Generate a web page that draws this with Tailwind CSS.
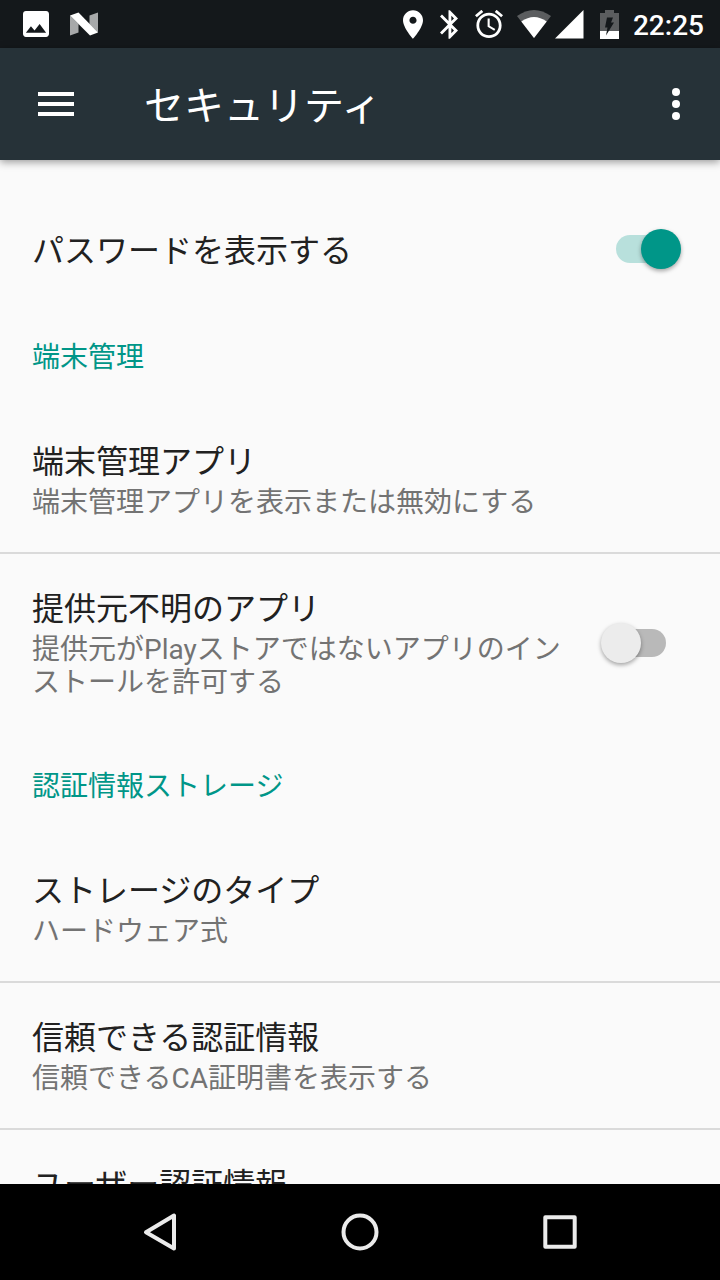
<!DOCTYPE html>
<html lang="ja">
<head>
  <meta charset="UTF-8">
  <meta name="viewport" content="width=device-width, initial-scale=1">
  <title>セキュリティ</title>
  <script src="https://cdn.jsdelivr.net/npm/@tailwindcss/browser@4"></script>
  <style>
    body {
      font-family: Roboto, 'Noto Sans CJK JP', sans-serif;
    }
  </style>
</head>
<body class="h-[1280px] w-[720px] flex flex-col overflow-hidden bg-[#fafafa] text-[#212121]">

  <!-- Status bar -->
  <div class="flex h-12 shrink-0 items-center bg-[#14181b] pl-[23px] pr-4 text-white">
    <svg class="h-[26px] w-[26px]" viewBox="3 3 18 18" fill="currentColor"><path d="M21 19V5c0-1.100-.9-2-2-2H5c-1.100 0-2 .9-2 2v14c0 1.100.9 2 2 2h14c1.100 0 2-.9 2-2zM8.500 13.500l2.500 3.010L14.500 12l4.500 6H5l3.500-4.500z"/></svg>
    <svg class="ml-[21px] h-6 w-7" viewBox="0 0 28 24">
      <path d="M0 3.500L8.500 12v8.500L0 23.500zM28 .5v20L19.500 12V3.500z" fill="#a7a9aa"/>
      <path d="M0 3.500L8.500 .5 28 20.500 20 23.500z" fill="#fff"/>
    </svg>
    <svg class="ml-auto h-[29px] w-5" viewBox="5 2 14 20" fill="currentColor"><path d="M12 2C8.130 2 5 5.130 5 9c0 5.250 7 13 7 13s7-7.750 7-13c0-3.870-3.130-7-7-7zm0 9.500c-1.380 0-2.500-1.120-2.500-2.500s1.120-2.500 2.500-2.500 2.500 1.120 2.500 2.500-1.120 2.500-2.500 2.500z"/></svg>
    <svg class="ml-[17px] h-[29px] w-[18px]" viewBox="5 2 12.710 20" fill="currentColor"><path d="M17.710 7.710L12 2h-1v7.590L6.410 5 5 6.410 10.590 12 5 17.590 6.410 19 11 14.410V22h1l5.710-5.710-4.300-4.290 4.300-4.290zM13 5.830l1.880 1.880L13 9.590V5.830zm1.880 10.460L13 18.170v-3.760l1.880 1.880z"/></svg>
    <svg class="ml-[17px] h-7 w-7" viewBox="2 2 20 20" fill="currentColor"><path d="M22 5.720l-4.600-3.860-1.290 1.530 4.600 3.860L22 5.720zM7.880 3.390L6.600 1.860 2 5.710l1.290 1.530 4.590-3.850zM12.500 8H11v6l4.750 2.850.75-1.230-4-2.370V8zM12 4c-4.970 0-9 4.030-9 9s4.020 9 9 9c4.970 0 9-4.030 9-9s-4.030-9-9-9zm0 16c-3.870 0-7-3.130-7-7s3.130-7 7-7 7 3.130 7 7-3.130 7-7 7z"/></svg>
    <svg class="ml-[14px] h-7 w-[34px]" viewBox="0 0 34 28">
      <path d="M0 6Q17-6 34 6L17 28z" fill="#5b5d5f"/>
      <path d="M4.300 11.500Q17 2.500 29.700 11.500L17 28z" fill="#fff"/>
    </svg>
    <svg class="ml-1 h-[29px] w-[29px]" viewBox="0 0 29 29" fill="currentColor"><path d="M28.500 0v28.500H0z"/></svg>
    <svg class="ml-4 h-[29px] w-[19px]" viewBox="0 0 19 29">
      <path d="M5 0h9v3h5v18H0V3h5z" fill="#5b5d5f"/>
      <path d="M0 21h19v8H0z" fill="#fff"/>
      <path d="M7 7.500h6l-2 5h3L6 25.500l1.500-8H5z" fill="#14181b"/>
    </svg>
    <span class="ml-[14px] mt-1 text-[28px]/8 font-medium">22:25</span>
  </div>

  <!-- Toolbar -->
  <header class="z-10 flex h-28 shrink-0 items-center bg-[#263238] pl-[38px] pr-10 text-white shadow-[0_2px_8px_rgba(0,0,0,0.4)]">
    <div class="flex w-9 flex-col gap-1.5">
      <span class="h-1 bg-white"></span>
      <span class="h-1 bg-white"></span>
      <span class="h-1 bg-white"></span>
    </div>
    <h1 class="ml-[70px] pt-1.5 text-[40px]/[48px]">セキュリティ</h1>
    <div class="ml-auto flex flex-col gap-1">
      <span class="size-2 rounded-full bg-white"></span>
      <span class="size-2 rounded-full bg-white"></span>
      <span class="size-2 rounded-full bg-white"></span>
    </div>
  </header>

  <!-- Settings list -->
  <main class="min-h-0 flex-1 overflow-hidden pt-9">
    <div class="flex h-[105px] items-center justify-between pl-8 pr-[39px]">
      <p class="pt-1.5 text-[32px]/[45px]">パスワードを表示する</p>
      <div class="flex h-10 w-20 items-center justify-center">
        <div class="flex h-7 w-[50px] items-center rounded-full bg-[#b8e0dc]">
          <span class="ml-[25px] size-10 shrink-0 rounded-full bg-[#009688] shadow-[0_2px_4px_rgba(0,0,0,0.35)]"></span>
        </div>
      </div>
    </div>

    <h2 class="flex h-[106px] items-center px-8 pt-1.5 text-[28px]/[33px] text-[#009688]">端末管理</h2>

    <div class="h-[147px] border-b-2 border-[#dadada] px-8 pt-[33px]">
      <p class="text-[32px]/[45px]">端末管理アプリ</p>
      <p class="mt-px text-[28px]/[33px] text-[#737373]">端末管理アプリを表示または無効にする</p>
    </div>

    <div class="flex h-[177px] items-center justify-between pl-8 pr-[39px]">
      <div class="w-[536px] self-start pt-[33px]">
        <p class="text-[32px]/[45px]">提供元不明のアプリ</p>
        <p class="mt-px text-[28px]/[33px] text-[#737373]">提供元がPlayストアではないアプリのイン<br>ストールを許可する</p>
      </div>
      <div class="flex h-10 w-20 items-center justify-center">
        <div class="flex h-7 w-[50px] items-center rounded-full bg-[#b9b9b9]">
          <span class="-ml-[15px] size-10 shrink-0 rounded-full bg-[#ececec] shadow-[0_2px_4px_rgba(0,0,0,0.35)]"></span>
        </div>
      </div>
    </div>

    <h2 class="flex h-[105px] items-center px-8 pt-1.5 text-[28px]/[33px] text-[#009688]">認証情報ストレージ</h2>

    <div class="h-[147px] border-b-2 border-[#dadada] px-8 pt-[33px]">
      <p class="text-[32px]/[45px]">ストレージのタイプ</p>
      <p class="mt-px text-[28px]/[33px] text-[#737373]">ハードウェア式</p>
    </div>

    <div class="h-[147px] border-b-2 border-[#dadada] px-8 pt-[33px]">
      <p class="text-[32px]/[45px]">信頼できる認証情報</p>
      <p class="mt-px text-[28px]/[33px] text-[#737373]">信頼できるCA証明書を表示する</p>
    </div>

    <div class="h-[147px] px-8 pt-[33px]">
      <p class="text-[32px]/[45px]">ユーザー認証情報</p>
    </div>
  </main>

  <!-- Navigation bar -->
  <nav class="z-10 flex h-24 shrink-0 items-center justify-center gap-[160px] bg-black">
    <svg class="size-10" viewBox="0 0 40 40" fill="none" stroke="#ebebeb" stroke-width="4" stroke-linejoin="round"><path d="M34 3.500v33L6 20.300z"/></svg>
    <svg class="size-10" viewBox="0 0 40 40" fill="none" stroke="#ebebeb" stroke-width="4"><circle cx="20" cy="20" r="16.500"/></svg>
    <svg class="size-10" viewBox="0 0 40 40" fill="none" stroke="#ebebeb" stroke-width="4" stroke-linejoin="round"><path d="M5.300 5.300h29.400v29.400H5.300z"/></svg>
  </nav>

</body>
</html>
